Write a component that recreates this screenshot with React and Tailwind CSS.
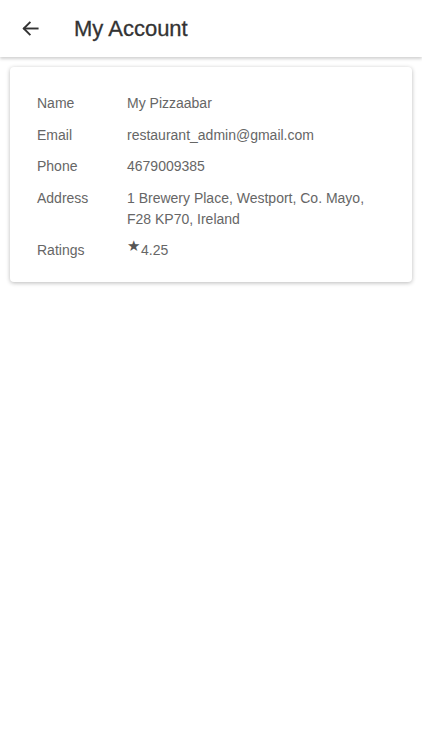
import {useState} from "react";

function App() {
  const [account] = useState({
    name: "My Pizzaabar",
    email: "restaurant_admin@gmail.com",
    phone: "4679009385",
    address: "1 Brewery Place, Westport, Co. Mayo, F28 KP70, Ireland",
    rating: "4.25",
  });

  const rows = [
    ["Name", account.name],
    ["Email", account.email],
    ["Phone", account.phone],
    ["Address", account.address],
  ];

  return (
    <div className="min-h-[750px] bg-white font-['Liberation_Sans',Arial,sans-serif]">
      <div className="flex items-center h-[57px] shadow-[0_2px_3px_rgba(0,0,0,0.18)] relative">
        <button className="ml-[19px] w-[22px] h-[22px] flex items-center justify-center text-[#333]">
          <svg width="19" height="19" viewBox="0 0 24 24" fill="none" stroke="currentColor" strokeWidth="2.4" strokeLinecap="square">
            <path d="M21 12H4" />
            <path d="M11 4.5L3.5 12L11 19.5" />
          </svg>
        </button>
        <h1 className="ml-[33px] text-[22px] text-[#333] font-normal [-webkit-text-stroke:0.3px_#333]">My Account</h1>
      </div>

      <div className="mx-[10px] mt-[10px] rounded-[4px] bg-white shadow-[0_1px_4px_rgba(0,0,0,0.28)] pl-[27px] pr-[20px] pt-[26px] pb-[21px]">
        <div className="grid grid-cols-[90px_1fr] gap-y-[10.5px] text-[14px] leading-[21px] text-[#666]">
          {rows.map(([label, value]) => (
            <>
              <div key={label}>{label}</div>
              <div>{value}</div>
            </>
          ))}
          <div>Ratings</div>
          <div className="flex items-start">
            <span className="text-[15px] leading-[16px] text-[#555] mt-[-2px] mr-[1px]">★</span>
            <span>{account.rating}</span>
          </div>
        </div>
      </div>
    </div>
  );
}

export default App
